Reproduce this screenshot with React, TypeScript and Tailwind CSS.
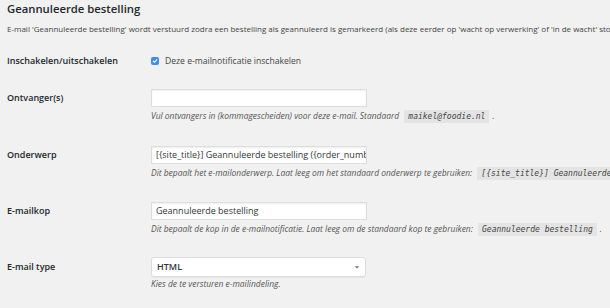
import React from 'react';

const font = { fontFamily: '"Open Sans", "Noto Sans", sans-serif' };

function Desc({ children }: { children: React.ReactNode }) {
  return (
    <p className="mt-[2px] h-[14px] leading-[14px] text-[8.45px] italic text-[#555] whitespace-nowrap">
      {children}
    </p>
  );
}

function Code({ children }: { children: React.ReactNode }) {
  return (
    <code
      className="mx-[3px] inline-block bg-[#e4e4e4] px-[4px] py-[1px] text-[8px] leading-[11px] text-[#444]"
      style={{ fontFamily: '"DejaVu Sans Mono", "Liberation Mono", monospace', fontStyle: 'italic' }}
    >
      {children}
    </code>
  );
}

function TextField({ value }: { value: string }) {
  return (
    <div className="h-[18px] w-[216px] overflow-hidden whitespace-nowrap border border-[#dddddd] bg-white px-[4px] text-[9px] leading-[16px] text-[#32373c] shadow-[inset_0_1px_2px_rgba(0,0,0,0.07)]">
      {value}
    </div>
  );
}

function Label({ children }: { children: React.ReactNode }) {
  return (
    <div className="flex h-[18px] w-[144px] shrink-0 items-center text-[9px] font-semibold text-[#23282d]">
      {children}
    </div>
  );
}

export default function App() {
  return (
    <div className="h-[308px] w-[610px] overflow-hidden bg-[#f1f1f1] pl-[7px] text-[#444]" style={font}>
      <h2 className="h-[18px] text-[11.3px] font-semibold leading-[18px] text-[#23282d]">Geannuleerde bestelling</h2>
      <p className="mt-[4px] h-[14px] whitespace-nowrap text-[8px] leading-[14px]">
        E-mail 'Geannuleerde bestelling' wordt verstuurd zodra een bestelling als geannuleerd is gemarkeerd (als deze eerder op 'wacht op verwerking' of 'in de wacht' stond).
      </p>

      <div className="mt-[16px] flex">
        <Label>Inschakelen/uitschakelen</Label>
        <label className="flex h-[18px] items-center gap-[6px] text-[8.6px] text-[#444]">
          <span className="flex h-[8px] w-[8px] items-center justify-center rounded-[2px] bg-[#3b8df1]">
            <svg width="6" height="6" viewBox="0 0 10 10">
              <path d="M2 5.2 L4.2 7.3 L8.2 2.6" fill="none" stroke="white" strokeWidth="1.8" strokeLinecap="round" strokeLinejoin="round" />
            </svg>
          </span>
          Deze e-mailnotificatie inschakelen
        </label>
      </div>

      <div className="mt-[19px] flex">
        <Label>Ontvanger(s)</Label>
        <div>
          <TextField value="" />
          <Desc>
            Vul ontvangers in (kommagescheiden) voor deze e-mail. Standaard <Code>maikel@foodie.nl</Code>.
          </Desc>
        </div>
      </div>

      <div className="mt-[23px] flex">
        <Label>Onderwerp</Label>
        <div>
          <TextField value="[{site_title}] Geannuleerde bestelling ({order_number})" />
          <Desc>
            Dit bepaalt het e-mailonderwerp. Laat leeg om het standaard onderwerp te gebruiken: <Code>[{'{'}site_title{'}'}] Geannuleerde bestelling ({'{'}order_number{'}'})</Code>.
          </Desc>
        </div>
      </div>

      <div className="mt-[22px] flex">
        <Label>E-mailkop</Label>
        <div>
          <TextField value="Geannuleerde bestelling" />
          <Desc>
            Dit bepaalt de kop in de e-mailnotificatie. Laat leeg om de standaard kop te gebruiken: <Code>Geannuleerde bestelling</Code>.
          </Desc>
        </div>
      </div>

      <div className="mt-[21px] flex">
        <div className="flex h-[20px] w-[144px] shrink-0 items-center text-[9px] font-semibold text-[#23282d]">E-mail type</div>
        <div>
          <div className="flex h-[20px] w-[215px] items-center justify-between rounded-[3px] border border-[#dddddd] bg-white pl-[5px] pr-[6px] text-[9px] font-semibold text-[#32373c] shadow-[0_1px_1px_rgba(0,0,0,0.05)]">
            <span>HTML</span>
            <svg width="4" height="3" viewBox="0 0 6 4">
              <path d="M0 0 H6 L3 3.5 Z" fill="#666" />
            </svg>
          </div>
          <p className="h-[14px] text-[8.45px] italic leading-[14px] text-[#555]">Kies de te versturen e-mailindeling.</p>
        </div>
      </div>
    </div>
  );
}
